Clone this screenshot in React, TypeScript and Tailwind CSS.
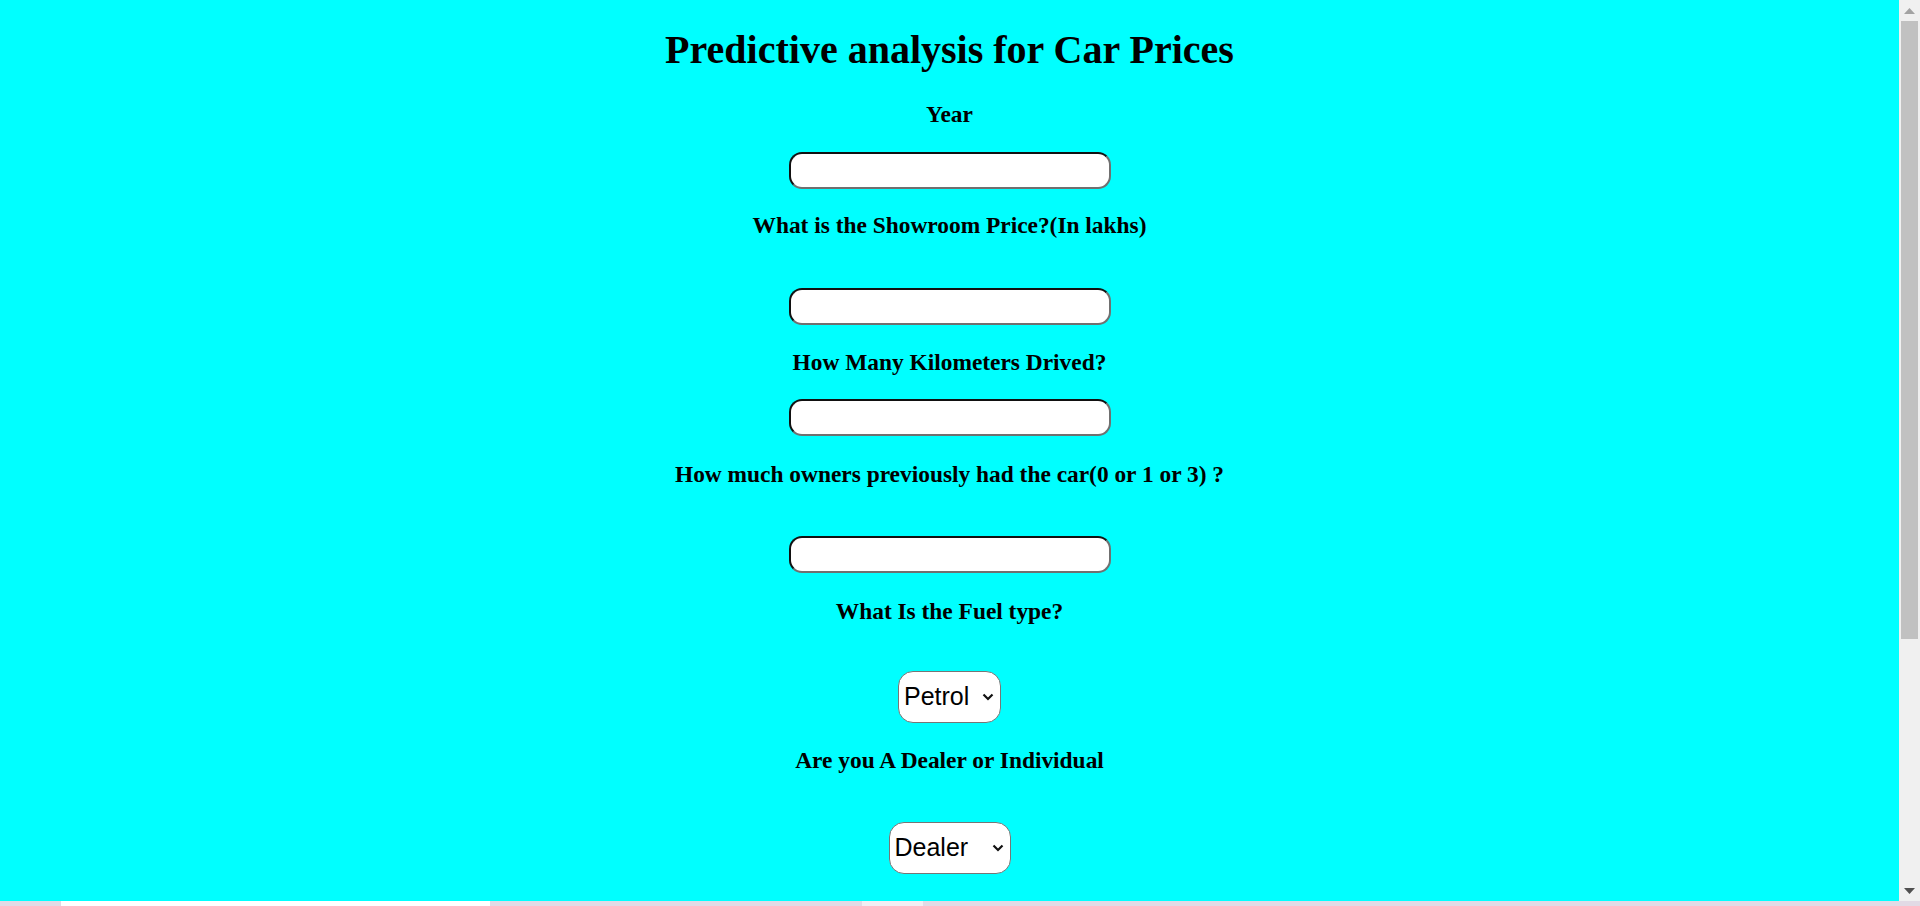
const serif = "font-['Liberation_Serif','Times_New_Roman',serif]";

const Label = ({ text, className }: { text: string; className: string }) => (
  <h3 className={`${serif} text-[23.4px] leading-[28px] font-bold text-black ${className}`}>{text}</h3>
);

const TextBox = ({ className }: { className: string }) => (
  <input
    type="text"
    className={`w-[322px] h-[37px] rounded-[13px] bg-white border-2 border-solid border-t-[#111] border-l-[#111] border-r-[#707070] border-b-[#707070] px-2 outline-none ${className}`}
  />
);

const Dropdown = ({
  options,
  className,
  width,
}: {
  options: string[];
  className: string;
  width: string;
}) => (
  <div className={`relative ${width} ${className}`}>
    <select className="appearance-none w-full h-[52px] rounded-[15px] bg-white border border-[#767676] pl-[5px] text-[25px] text-black font-['Liberation_Sans',Arial,sans-serif] outline-none">
      {options.map((o) => (
        <option key={o} value={o}>
          {o}
        </option>
      ))}
    </select>
    <svg
      className="absolute right-[7px] top-[22px] pointer-events-none"
      width="12"
      height="8"
      viewBox="0 0 12 8"
      fill="none"
    >
      <path d="M1.5 1.5 L6 6 L10.5 1.5" stroke="#111" strokeWidth="2.2" />
    </svg>
  </div>
);

// drawn scrollbar, as in the screenshot
const Scrollbar = () => (
  <div className="w-[21px] h-full bg-[#f0f0f0] flex flex-col items-center">
    <div className="h-[21px] w-full flex items-center justify-center">
      <svg width="11" height="6" viewBox="0 0 11 6">
        <polygon points="0,6 5.5,0 11,6" fill="#a3a3a3" />
      </svg>
    </div>
    <div className="h-[618px] w-[17px] bg-[#c1c1c1]" />
    <div className="flex-1" />
    <div className="h-[21px] w-full flex items-center justify-center">
      <svg width="11" height="6" viewBox="0 0 11 6">
        <polygon points="0,0 11,0 5.5,6" fill="#505050" />
      </svg>
    </div>
  </div>
);

const App = () => {
  return (
    <div className="h-[906px] flex flex-col overflow-hidden">
      <div className="h-[901px] flex bg-[#00ffff]">
        {/* form */}
        <form className="flex-1 h-full overflow-hidden flex flex-col items-center text-center">
          <h1 className={`${serif} mt-[27px] text-[40px] leading-[46px] font-bold text-black`}>
            Predictive analysis for Car Prices
          </h1>

          <Label text="Year" className="mt-[27px]" />
          <TextBox className="mt-[24px]" />

          <Label text="What is the Showroom Price?(In lakhs)" className="mt-[22px]" />
          <TextBox className="mt-[49px]" />

          <Label text="How Many Kilometers Drived?" className="mt-[23px]" />
          <TextBox className="mt-[23px]" />

          <Label text="How much owners previously had the car(0 or 1 or 3) ?" className="mt-[24px]" />
          <TextBox className="mt-[48px]" />

          <Label text="What Is the Fuel type?" className="mt-[24px]" />
          <Dropdown options={["Petrol", "Diesel", "CNG"]} width="w-[103px]" className="mt-[46px]" />

          <Label text="Are you A Dealer or Individual" className="mt-[23px]" />
          <Dropdown options={["Dealer", "Individual"]} width="w-[122px]" className="mt-[48px]" />
        </form>
        <Scrollbar />
      </div>

      {/* strip under the page */}
      <div className="h-[5px] flex bg-[#e2dae5]">
        <div className="w-[61px]" />
        <div className="w-[429px] bg-white" />
        <div className="w-[372px]" />
        <div className="w-[61px] bg-[#f2eef3]" />
      </div>
    </div>
  );
};

export default App;
